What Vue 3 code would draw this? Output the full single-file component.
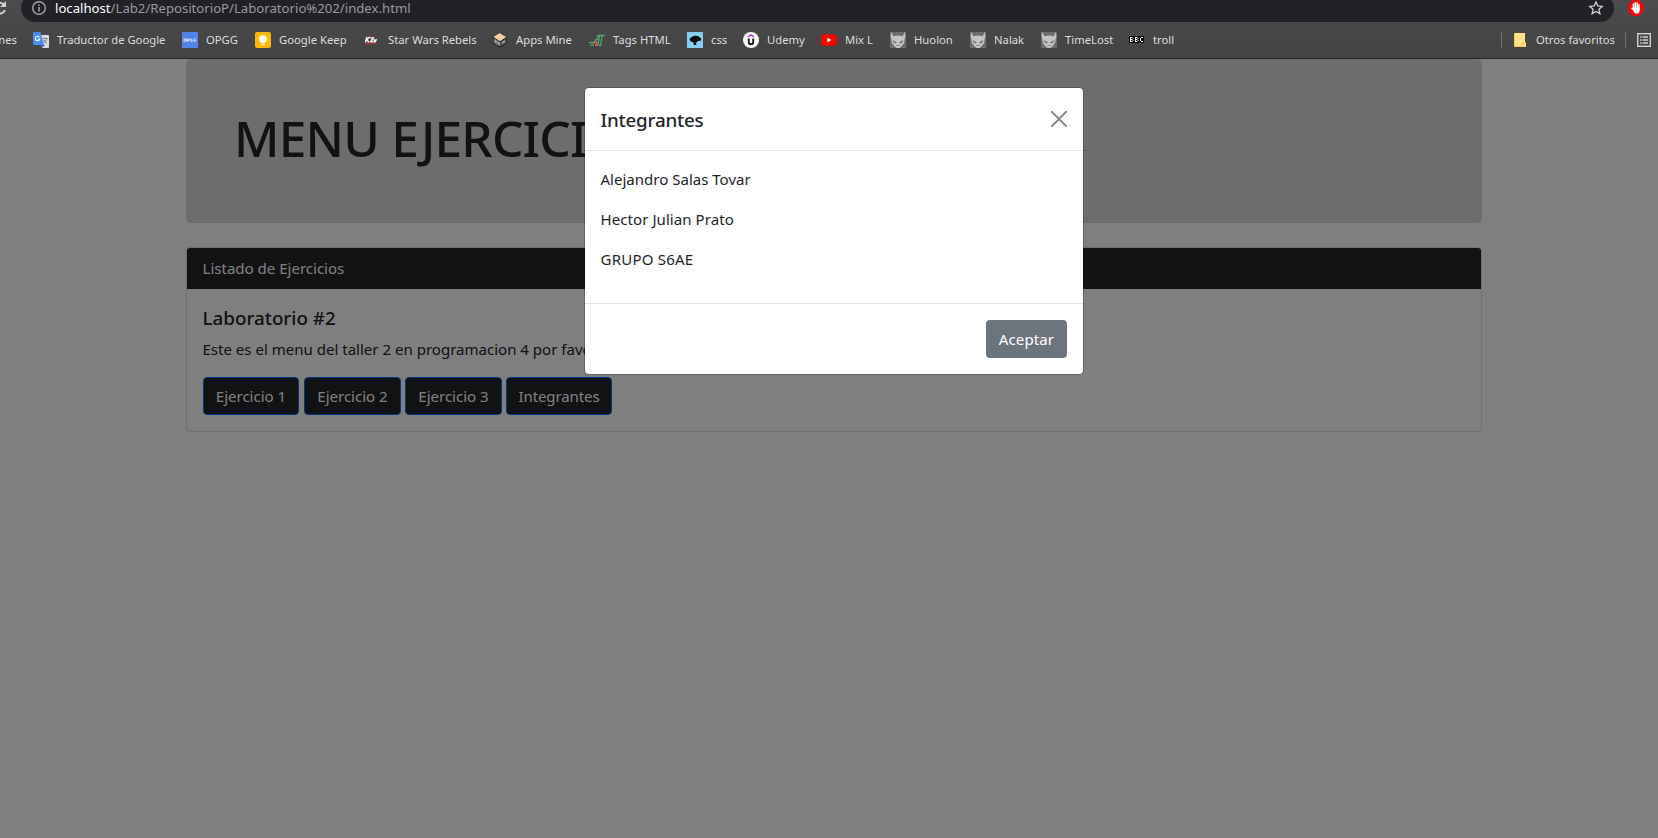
<script setup>
const bookmarks = [
  { icon: 'translate', label: 'Traductor de Google', width: 109 },
  { icon: 'opgg', label: 'OPGG', width: 33 },
  { icon: 'keep', label: 'Google Keep', width: 69 },
  { icon: 'rebels', label: 'Star Wars Rebels', width: 88 },
  { icon: 'mine', label: 'Apps Mine', width: 57 },
  { icon: 'tags', label: 'Tags HTML', width: 58 },
  { icon: 'css', label: 'css', width: 16 },
  { icon: 'udemy', label: 'Udemy', width: 38 },
  { icon: 'youtube', label: 'Mix L', width: 29 },
  { icon: 'demon', label: 'Huolon', width: 40 },
  { icon: 'demon', label: 'Nalak', width: 31 },
  { icon: 'demon', label: 'TimeLost', width: 48 },
  { icon: 'bbc', label: 'troll', width: 22 },
]
const actions = ['Ejercicio 1', 'Ejercicio 2', 'Ejercicio 3', 'Integrantes']
const members = ['Alejandro Salas Tovar', 'Hector Julian Prato', 'GRUPO S6AE']
</script>

<template>
  <div class="window">
    <header class="browser">
      <div class="toolbar">
        <svg class="reload" width="8" height="16" viewBox="0 0 8 16">
          <path d="M-4 4.2A5.6 5.6 0 0 1 4 4.6M5 10.2A5.6 5.6 0 0 1-4 12" fill="none" stroke="#d0d1d2" stroke-width="2" />
          <path d="M6 1v6H0z" fill="#d0d1d2" />
        </svg>
        <div class="omnibox">
          <svg class="info" width="16" height="16" viewBox="0 0 16 16">
            <circle cx="8" cy="8" r="6.3" fill="none" stroke="#a0a4a8" stroke-width="1.4" />
            <path d="M7.3 7h1.5v4.4H7.3zM7.3 4.5h1.5V6H7.3z" fill="#a0a4a8" />
          </svg>
          <span class="url"><b>localhost</b>/Lab2/RepositorioP/Laboratorio%202/index.html</span>
          <svg class="star" width="16" height="16" viewBox="0 0 16 16">
            <path d="M8 2l1.800 4 4.400.4-3.300 2.900 1 4.300L8 11.400l-3.900 2.200 1-4.300L1.800 6.400l4.400-.4z" fill="none" stroke="#cfd1d4" stroke-width="1.300" />
          </svg>
        </div>
        <svg class="adblock" width="16" height="16" viewBox="0 0 16 16">
          <path d="M4.700 0h6.600L16 4.700v6.600L11.300 16H4.700L0 11.300V4.700z" fill="#e40d12" />
          <path d="M5.400 8V4M7.300 8V2.800M9.200 8V3M11 9V4.500M3.900 8.200L6 10" stroke="#fff" stroke-width="1.500" stroke-linecap="round" />
          <path d="M4.700 7.500h7v2.800c0 2-1.200 3.300-2.900 3.300-1.700 0-2.500-.8-3.300-2.300z" fill="#fff" />
        </svg>
      </div>

      <nav class="bookmarks">
        <span class="cut">nes</span>
        <span v-for="b in bookmarks" :key="b.label" class="bookmark">
          <svg width="16" height="16" viewBox="0 0 16 16">
            <template v-if="b.icon === 'translate'">
              <path d="M6 3h9a1 1 0 0 1 1 1v11a1 1 0 0 1-1 1H9z" fill="#dcdcdc" />
              <path d="M9.500 6.500h5M12 5.500v1M13.600 6.500c-.4 2-1.600 3.500-3.100 4.500M10.800 8c.8 1.500 1.800 2.500 3.200 3.300" fill="none" stroke="#72808c" />
              <path d="M8 13h4l-3 3z" fill="#3367d6" />
              <path d="M1 0h6.500l3.700 13H1a1 1 0 0 1-1-1V1a1 1 0 0 1 1-1z" fill="#4c8bf5" />
              <path d="M6.400 5.100A2.300 2.300 0 1 0 6.800 7H4.700" fill="none" stroke="#fff" stroke-width="1.100" />
            </template>
            <template v-else-if="b.icon === 'opgg'">
              <rect width="16" height="16" rx=".6" fill="#5383e8" />
              <g fill="none" stroke="#dfe8fb" stroke-width=".9">
                <rect x="2" y="7" width="2.200" height="2.200" />
                <path d="M5.400 10V7h1.700v1.400H5.400M10.300 7H8.600v2.200h1.700V8.200M13.700 7H12v2.200h1.700V8.200" />
              </g>
            </template>
            <template v-else-if="b.icon === 'keep'">
              <rect width="16" height="16" rx="2" fill="#fbb904" />
              <circle cx="8" cy="7" r="3.800" fill="#fff" />
              <path d="M6 9h4v2H6zM6.300 11.800h3.400V13H6.300z" fill="#fff" />
            </template>
            <template v-else-if="b.icon === 'rebels'">
              <path d="M1 11.500h5M8 11.300h4M4 9.500l2 1.500M8 4.500h2" stroke="#c31f27" stroke-width="1.300" />
              <path d="M2.800 4.800L1.500 10.300M6 4.800L2.700 7.700 5 10.300M6.500 6h2.700L6.800 9.800h2.700M10 7.200l.8 2.600 1.800-2.600" fill="none" stroke="#f2f2f2" stroke-width="1.500" />
            </template>
            <template v-else-if="b.icon === 'mine'">
              <path d="M7.500.5L14.500 5v6.500L8 15.500 1 11.500V5z" fill="#181514" />
              <path d="M7.500 1.100L14.300 5 8 9.200 1.300 5z" fill="#f5cfa3" />
              <path d="M1.700 6.200L8 10v4.700L1.700 11z" fill="#77797b" />
              <path d="M8 10L14 6.200V11l-6 3.700z" fill="#515355" />
              <path d="M2.500 7.500l2 1.200v2l-2-1.200zM6 10l1.500.8v2L6 12zM10 10l3-1.800v2L10 12z" fill="#a2a4a5" />
            </template>
            <template v-else-if="b.icon === 'tags'">
              <path d="M15.800 3.500H9.500c-1 0-1 1.500-1 2.500M10.500 4L9 13.500M13 4l-1.500 9.500H10M0 10.500h5l2-3h3M1 13h4" fill="none" stroke="#4fa868" stroke-width="1.300" />
              <path d="M4.500 11.500l3-2 1 3.500H6" fill="none" stroke="#d0685a" stroke-width="1.300" />
            </template>
            <template v-else-if="b.icon === 'css'">
              <rect width="16" height="16" fill="#83cff0" />
              <path d="M2.500 7L5 4.800l2.500-1L11 4l3 2.200.2 2.300-2 .2L10 9.500l-1 1.700.4 1.800H6.800L6.500 10.500 3.500 9.300z" fill="#050607" />
            </template>
            <template v-else-if="b.icon === 'udemy'">
              <circle cx="8" cy="8" r="8" fill="#fff" />
              <path d="M5 4.800l3-1.900 3 1.900" fill="none" stroke="#a435f0" stroke-width="1.500" />
              <path d="M5.800 6.500v3.800c0 1.300.8 2 2.200 2s2.200-.7 2.200-2V6.500" fill="none" stroke="#17181a" stroke-width="1.900" />
            </template>
            <template v-else-if="b.icon === 'youtube'">
              <rect y="2.500" width="16" height="11.300" rx="2.400" fill="#f00" />
              <path d="M6.300 5.700v4.800l4.200-2.400z" fill="#fff" />
            </template>
            <template v-else-if="b.icon === 'demon'">
              <rect width="16" height="16" fill="#6c6c6c" />
              <path d="M1.300 0L3.300 4.200Q8 2.800 12.700 4.200L14.700 0q1.400 4-.2 7.500.3 4-2.700 6.500L9.500 16h-3l-2.300-2Q1.200 11.500 1.500 7.500-.1 4 1.300 0z" fill="#c4c4c4" />
              <path d="M2.800 8l4 2.500-.8.900q-2.500 0-3.200-3.400zM13.200 8l-4 2.500.8.900q2.500 0 3.200-3.400z" fill="#6b6b6b" />
              <path d="M6 13.600h4" stroke="#8c8c8c" />
            </template>
            <template v-else>
              <rect x="0" y="4" width="15" height="7" fill="#000" />
              <path d="M1.500 5v5M1 5.500h2.500M1 7.500h2.500M1 9.500h2.500M4 6v1M4 8v1M6.500 5v5M6 5.500h2.500M6 7.500h2.500M6 9.500h2.500M9 6v1M9 8v1M11.500 6v3M12 5.500h2M12 9.500h2" fill="none" stroke="#f4f4f4" stroke-width="1" />
            </template>
          </svg>
          <span class="label" :style="{ width: b.width + 'px' }">{{ b.label }}</span>
        </span>
        <span class="others">
          <i class="rule"></i>
          <svg class="folder" width="12" height="16" viewBox="0 0 12 16">
            <path d="M0 1h11v9h1v5H0z" fill="#ffe08a" />
            <path d="M.5 1v13.500h10M8.500 14.500V11H12" fill="none" stroke="#f0c64c" />
          </svg>
          <span class="others-label">Otros favoritos</span>
          <i class="rule"></i>
          <svg class="list" width="14" height="14" viewBox="0 0 14 14">
            <rect x=".7" y=".7" width="12.600" height="12.600" fill="none" stroke="#d0d0d0" stroke-width="1.400" />
            <path d="M3 4h1.500M3 7h1.500M3 10h1.500M5.500 4H11M5.500 7H11M5.500 10H11" stroke="#d0d0d0" stroke-width="1.300" />
          </svg>
        </span>
      </nav>
    </header>

    <main class="page">
      <section class="hero"><h1>MENU EJERCICIOS</h1></section>
      <section class="card">
        <div class="card-header">Listado de Ejercicios</div>
        <div class="card-body">
          <h5>Laboratorio #2</h5>
          <p>Este es el menu del taller 2 en programacion 4 por favor</p>
          <div class="actions">
            <button v-for="a in actions" :key="a" :class="['dark', { wide: a === 'Integrantes' }]">{{ a }}</button>
          </div>
        </div>
      </section>
    </main>

    <div class="backdrop">
      <div class="modal">
        <div class="modal-header">
          <h5>Integrantes</h5>
          <svg class="close" width="16" height="16" viewBox="0 0 16 16">
            <path d="M.7.700l14.600 14.600M15.300.7L.7 15.300" stroke="#808080" stroke-width="1.900" stroke-linecap="round" />
          </svg>
        </div>
        <div class="modal-body">
          <p v-for="m in members" :key="m">{{ m }}</p>
        </div>
        <div class="modal-footer"><button class="accept">Aceptar</button></div>
      </div>
    </div>
  </div>
</template>

<style>
body {
  margin: 0;
  background: #fff;
}
</style>

<style scoped>
* {
  box-sizing: border-box;
}
.window {
  position: relative;
  height: 838px;
  overflow: hidden;
  display: flex;
  flex-direction: column;
  font: 15.04px/24px "Noto Sans", "Open Sans", sans-serif;
  color: #212529;
}
h1,
h5,
p {
  margin: 0;
}
svg {
  display: block;
  flex: none;
}
.browser {
  height: 59px;
  flex: none;
  overflow: hidden;
  background: linear-gradient(#4c4c4c, #434343);
  border-bottom: 1px solid #262626;
}
.toolbar {
  height: 22px;
  display: flex;
  align-items: flex-end;
}
.reload {
  margin-bottom: 6px;
}
.omnibox {
  width: 1593px;
  height: 28px;
  flex: none;
  margin-left: 13px;
  padding: 0 10px;
  display: flex;
  align-items: center;
  background: #202227;
  border-radius: 14px;
}
.url {
  flex: 1;
  margin-left: 8px;
  font-size: 13.16px;
  line-height: 20px;
  color: #969a9f;
}
.url b {
  font-weight: 400;
  color: #fff;
}
.adblock {
  margin: 0 0 6px 14px;
}
.bookmarks {
  height: 36px;
  display: flex;
  align-items: center;
  font-size: 11.28px;
  line-height: 16px;
  color: #dcdddf;
  white-space: nowrap;
}
.cut {
  width: 17px;
  margin-right: 16px;
  display: flex;
  justify-content: flex-end;
}
.bookmark {
  display: flex;
  align-items: center;
  margin-right: 16px;
}
.label {
  margin-left: 8px;
}
.others {
  margin-left: auto;
  margin-right: 7px;
  display: flex;
  align-items: center;
}
.rule {
  width: 1px;
  height: 16px;
  background: #6f7072;
}
.folder {
  margin: 0 10px 0 12px;
}
.others-label {
  width: 79px;
  margin-right: 10px;
}
.list {
  margin-left: 11px;
}
.page {
  flex: 1;
  padding: 0 176px 0 186px;
}
.hero {
  height: 164px;
  padding: 49px 48px 47px;
  margin-bottom: 24px;
  background: #d9dbdd;
  border-radius: 5px;
}
.hero h1 {
  font-size: 49.6px;
  line-height: 60px;
  font-weight: 500;
  letter-spacing: -0.8px;
}
.card {
  background: #fff;
  border: 1px solid #dfdfdf;
  border-radius: 4px;
}
.card-header {
  padding: 8px 15.5px;
  height: 41px;
  background: #212529;
  color: #fff;
  border-radius: 3px 3px 0 0;
}
.card-body {
  padding: 16px;
}
h5 {
  font-size: 18.8px;
  line-height: 24px;
  font-weight: 500;
}
.card-body h5 {
  padding-top: 1px;
  margin: 0 0 7px -0.5px;
}
.card-body p {
  margin: 0 0 16px -0.5px;
}
.actions {
  display: flex;
  gap: 4px;
}
button {
  height: 38px;
  padding: 0;
  font: inherit;
  color: #fff;
  border-radius: 4px;
}
.dark {
  width: 97px;
  background: #212529;
  border: 1px solid #0d6efd;
}
.dark:first-child {
  width: 96px;
  margin-right: 1px;
}
.wide {
  width: 106px;
  letter-spacing: -0.12px;
}
.backdrop {
  position: absolute;
  inset: 59px 0 0;
  background: rgba(0, 0, 0, 0.5);
}
.modal {
  width: 500px;
  margin: 28px 0 0 584px;
  background: #fff;
  background-clip: padding-box;
  border: 1px solid rgba(0, 0, 0, 0.2);
  border-radius: 5px;
}
.modal-header {
  height: 63px;
  padding: 0 16px 0 15.5px;
  display: flex;
  align-items: center;
  justify-content: space-between;
  border-bottom: 1px solid #dee2e6;
}
.modal-header h5 {
  letter-spacing: -0.2px;
  padding-top: 2px;
}
.modal-body {
  padding: 16px 15.5px 32px;
  display: grid;
  gap: 16px;
}
.modal-body p:nth-child(2) {
  letter-spacing: 0.06px;
}
.modal-body p:nth-child(3) {
  letter-spacing: 0.2px;
}
.modal-footer {
  padding: 16px;
  display: flex;
  justify-content: flex-end;
  border-top: 1px solid #dee2e6;
}
.accept {
  width: 81px;
  background: #6c757d;
  border: 0;
  letter-spacing: 0.1px;
}
</style>
